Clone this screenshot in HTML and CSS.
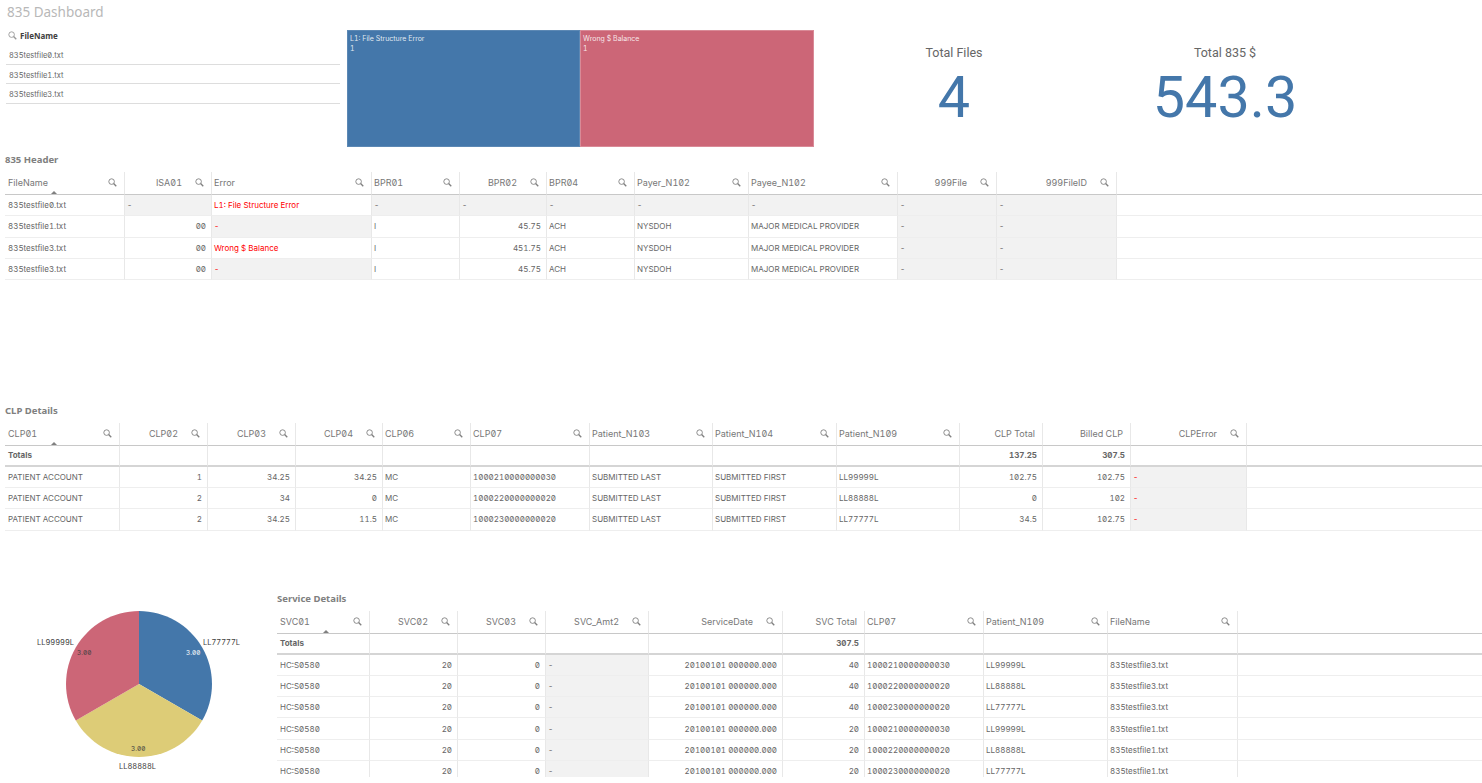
FILE: index.html
```html
<!DOCTYPE html>
<html lang="en">
<head>
    <meta charset="UTF-8">
    <title>835 Dashboard</title>
    <link rel="stylesheet" href="styles.css">
</head>
<body>
    <svg class="defs" width="0" height="0">
        <symbol id="find" viewBox="0 0 10 10">
            <circle cx="4" cy="4" r="3.1" fill="none" stroke="currentColor" stroke-width="1"/>
            <path d="M6.2 6.2L9.2 9.2" stroke="currentColor" stroke-width="1.5"/>
        </symbol>
    </svg>
    <div id="page">
        <div class="title">835 Dashboard</div>
        <div class="top">
            <div class="list">
                <div class="list-head"><svg class="ico"><use href="#find"/></svg><b>FileName</b></div>
                <div class="list-row">835testfile0.txt</div>
                <div class="list-row">835testfile1.txt</div>
                <div class="list-row">835testfile3.txt</div>
            </div>
            <div class="tree">
                <div class="leaf blue">L1: File Structure Error<br>1</div>
                <div class="leaf red">Wrong $ Balance<br>1</div>
            </div>
            <div class="kpi files">
                <div class="kpi-label">Total Files</div>
                <div class="kpi-num">4</div>
            </div>
            <div class="kpi money">
                <div class="kpi-label">Total 835 $</div>
                <div class="kpi-num">543.3</div>
            </div>
        </div>

        <div class="sect s1">835 Header</div>
        <table class="grid t1">
            <colgroup><col><col><col><col><col><col><col><col><col><col><col></colgroup>
            <tr>
                <th class="sorted"><div class="hd"><span>FileName</span><svg class="ico"><use href="#find"/></svg></div></th>
                <th><div class="hd n"><span>ISA01</span><svg class="ico"><use href="#find"/></svg></div></th>
                <th><div class="hd"><span>Error</span><svg class="ico"><use href="#find"/></svg></div></th>
                <th><div class="hd"><span>BPR01</span><svg class="ico"><use href="#find"/></svg></div></th>
                <th><div class="hd n"><span>BPR02</span><svg class="ico"><use href="#find"/></svg></div></th>
                <th><div class="hd"><span>BPR04</span><svg class="ico"><use href="#find"/></svg></div></th>
                <th><div class="hd"><span>Payer_N102</span><svg class="ico"><use href="#find"/></svg></div></th>
                <th><div class="hd"><span>Payee_N102</span><svg class="ico"><use href="#find"/></svg></div></th>
                <th><div class="hd n"><span>999File</span><svg class="ico"><use href="#find"/></svg></div></th>
                <th><div class="hd n"><span>999FileID</span><svg class="ico"><use href="#find"/></svg></div></th>
                <th class="fill"></th>
            </tr>
            <tr>
                <td>835testfile0.txt</td><td class="g">-</td><td class="err">L1: File Structure Error</td><td class="g">-</td><td class="g">-</td><td class="g">-</td><td class="g">-</td><td class="g">-</td><td class="g">-</td><td class="g">-</td><td class="fill"></td>
            </tr>
            <tr>
                <td>835testfile1.txt</td><td class="n">00</td><td class="g err">-</td><td>I</td><td class="n">45.75</td><td>ACH</td><td>NYSDOH</td><td>MAJOR MEDICAL PROVIDER</td><td class="g">-</td><td class="g">-</td><td class="fill"></td>
            </tr>
            <tr>
                <td>835testfile3.txt</td><td class="n">00</td><td class="err">Wrong $ Balance</td><td>I</td><td class="n">451.75</td><td>ACH</td><td>NYSDOH</td><td>MAJOR MEDICAL PROVIDER</td><td class="g">-</td><td class="g">-</td><td class="fill"></td>
            </tr>
            <tr>
                <td>835testfile3.txt</td><td class="n">00</td><td class="g err">-</td><td>I</td><td class="n">45.75</td><td>ACH</td><td>NYSDOH</td><td>MAJOR MEDICAL PROVIDER</td><td class="g">-</td><td class="g">-</td><td class="fill"></td>
            </tr>
        </table>

        <div class="sect s2">CLP Details</div>
        <table class="grid t2">
            <colgroup><col><col><col><col><col><col><col><col><col><col><col><col><col></colgroup>
            <tr>
                <th class="sorted"><div class="hd"><span>CLP01</span><svg class="ico"><use href="#find"/></svg></div></th>
                <th><div class="hd n"><span>CLP02</span><svg class="ico"><use href="#find"/></svg></div></th>
                <th><div class="hd n"><span>CLP03</span><svg class="ico"><use href="#find"/></svg></div></th>
                <th><div class="hd n"><span>CLP04</span><svg class="ico"><use href="#find"/></svg></div></th>
                <th><div class="hd"><span>CLP06</span><svg class="ico"><use href="#find"/></svg></div></th>
                <th><div class="hd"><span>CLP07</span><svg class="ico"><use href="#find"/></svg></div></th>
                <th><div class="hd"><span>Patient_N103</span><svg class="ico"><use href="#find"/></svg></div></th>
                <th><div class="hd"><span>Patient_N104</span><svg class="ico"><use href="#find"/></svg></div></th>
                <th><div class="hd"><span>Patient_N109</span><svg class="ico"><use href="#find"/></svg></div></th>
                <th><div class="hd n"><span>CLP Total</span></div></th>
                <th><div class="hd n"><span>Billed CLP</span></div></th>
                <th><div class="hd n"><span>CLPError</span><svg class="ico"><use href="#find"/></svg></div></th>
                <th class="fill"></th>
            </tr>
            <tr class="totals">
                <td>Totals</td><td></td><td></td><td></td><td></td><td></td><td></td><td></td><td></td><td class="n">137.25</td><td class="n">307.5</td><td></td><td class="fill"></td>
            </tr>
            <tr>
                <td>PATIENT ACCOUNT</td><td class="n">1</td><td class="n">34.25</td><td class="n">34.25</td><td>MC</td><td>1000210000000030</td><td>SUBMITTED LAST</td><td>SUBMITTED FIRST</td><td>LL99999L</td><td class="n">102.75</td><td class="n">102.75</td><td class="g err">-</td><td class="fill"></td>
            </tr>
            <tr>
                <td>PATIENT ACCOUNT</td><td class="n">2</td><td class="n">34</td><td class="n">0</td><td>MC</td><td>1000220000000020</td><td>SUBMITTED LAST</td><td>SUBMITTED FIRST</td><td>LL88888L</td><td class="n">0</td><td class="n">102</td><td class="g err">-</td><td class="fill"></td>
            </tr>
            <tr>
                <td>PATIENT ACCOUNT</td><td class="n">2</td><td class="n">34.25</td><td class="n">11.5</td><td>MC</td><td>1000230000000020</td><td>SUBMITTED LAST</td><td>SUBMITTED FIRST</td><td>LL77777L</td><td class="n">34.5</td><td class="n">102.75</td><td class="g err">-</td><td class="fill"></td>
            </tr>
        </table>

        <div class="bottom">
            <svg class="pie" width="272" height="185" viewBox="0 0 272 185">
                <path d="M134 86V13A73 73 0 0 1 197.2 122.5Z" fill="#4477aa"/>
                <path d="M134 86L197.2 122.5A73 73 0 0 1 70.8 122.5Z" fill="#ddcc77"/>
                <path d="M134 86L70.8 122.5A73 73 0 0 1 134 13Z" fill="#cc6677"/>
                <text x="198" y="47">LL77777L</text>
                <text x="32" y="46.500">LL99999L</text>
                <text x="114" y="171">LL88888L</text>
                <text class="val light" x="181" y="57">3.00</text>
                <text class="val" x="72" y="57">3.00</text>
                <text class="val" x="126" y="153">3.00</text>
            </svg>
            <div class="service">
                <div class="sect">Service Details</div>
                <table class="grid t3">
                    <colgroup><col><col><col><col><col><col><col><col><col><col></colgroup>
                    <tr>
                        <th class="sorted"><div class="hd"><span>SVC01</span><svg class="ico"><use href="#find"/></svg></div></th>
                        <th><div class="hd n"><span>SVC02</span><svg class="ico"><use href="#find"/></svg></div></th>
                        <th><div class="hd n"><span>SVC03</span><svg class="ico"><use href="#find"/></svg></div></th>
                        <th><div class="hd n"><span>SVC_Amt2</span><svg class="ico"><use href="#find"/></svg></div></th>
                        <th><div class="hd n"><span>ServiceDate</span><svg class="ico"><use href="#find"/></svg></div></th>
                        <th><div class="hd n"><span>SVC Total</span></div></th>
                        <th><div class="hd"><span>CLP07</span><svg class="ico"><use href="#find"/></svg></div></th>
                        <th><div class="hd"><span>Patient_N109</span><svg class="ico"><use href="#find"/></svg></div></th>
                        <th><div class="hd"><span>FileName</span><svg class="ico"><use href="#find"/></svg></div></th>
                        <th class="fill"></th>
                    </tr>
                    <tr class="totals">
                        <td>Totals</td><td></td><td></td><td></td><td></td><td class="n">307.5</td><td></td><td></td><td></td><td class="fill"></td>
                    </tr>
                    <tr>
                        <td>HC:S0580</td><td class="n">20</td><td class="n">0</td><td class="g">-</td><td class="n">20100101 000000.000</td><td class="n">40</td><td>1000210000000030</td><td>LL99999L</td><td>835testfile3.txt</td><td class="fill"></td>
                    </tr>
                    <tr>
                        <td>HC:S0580</td><td class="n">20</td><td class="n">0</td><td class="g">-</td><td class="n">20100101 000000.000</td><td class="n">40</td><td>1000220000000020</td><td>LL88888L</td><td>835testfile3.txt</td><td class="fill"></td>
                    </tr>
                    <tr>
                        <td>HC:S0580</td><td class="n">20</td><td class="n">0</td><td class="g">-</td><td class="n">20100101 000000.000</td><td class="n">40</td><td>1000230000000020</td><td>LL77777L</td><td>835testfile3.txt</td><td class="fill"></td>
                    </tr>
                    <tr>
                        <td>HC:S0580</td><td class="n">20</td><td class="n">0</td><td class="g">-</td><td class="n">20100101 000000.000</td><td class="n">20</td><td>1000210000000030</td><td>LL99999L</td><td>835testfile1.txt</td><td class="fill"></td>
                    </tr>
                    <tr>
                        <td>HC:S0580</td><td class="n">20</td><td class="n">0</td><td class="g">-</td><td class="n">20100101 000000.000</td><td class="n">20</td><td>1000220000000020</td><td>LL88888L</td><td>835testfile1.txt</td><td class="fill"></td>
                    </tr>
                    <tr>
                        <td>HC:S0580</td><td class="n">20</td><td class="n">0</td><td class="g">-</td><td class="n">20100101 000000.000</td><td class="n">20</td><td>1000230000000020</td><td>LL77777L</td><td>835testfile1.txt</td><td class="fill"></td>
                    </tr>
                </table>
            </div>
        </div>
    </div>
</body>
</html>
```

FILE: styles.css
```css
html, body {
    margin: 0;
    height: 100%;
    overflow: hidden;
    background: #fff;
}
body {
    font-family: Inter, "Noto Sans", sans-serif;
    font-size: 8px;
    font-feature-settings: "zero", "tnum";
    color: #666;
}
.defs {
    position: absolute;
}
#page {
    height: 777px;
    overflow: hidden;
    padding-left: 5px;
}
.title {
    height: 23px;
    padding: 4px 0 0 2px;
    box-sizing: border-box;
    font-family: "Noto Sans", sans-serif;
    font-size: 13.500px;
    line-height: 16px;
    color: #b8b8b8;
    font-feature-settings: normal;
}
.ico {
    width: 9px;
    height: 9px;
    flex: none;
    color: #808080;
}

/* top row */
.top {
    display: flex;
    height: 125px;
}
.list {
    width: 334px;
    margin-left: 1px;
    margin-right: 7px;
}
.list-head {
    display: flex;
    align-items: center;
    gap: 3px;
    height: 21px;
    padding: 3px 0 0 2px;
    box-sizing: border-box;
    color: #404040;
    font-family: "Noto Sans", sans-serif;
    font-feature-settings: normal;
}
.list-head .ico {
    color: #999;
}
.list-row {
    height: 19.500px;
    padding: 5px 0 0 3px;
    box-sizing: border-box;
    line-height: 12px;
    font-size: 7.500px;
    border-bottom: 1px solid #ddd;
}
.list-row:nth-child(2) {
    height: 20.500px;
    padding-top: 6px;
}
.tree {
    display: flex;
    width: 467px;
    height: 117px;
    margin-top: 7px;
    color: #fff;
}
.leaf {
    box-sizing: border-box;
    padding: 3px 2px;
    line-height: 10px;
    font-size: 7px;
    color: rgba(255, 255, 255, 0.85);
}
.blue {
    width: 233px;
    background: #4477aa;
    border: 1px solid #5c88b4;
}
.red {
    width: 234px;
    background: #cc6677;
    border: 1px solid #d98a97;
}
.kpi {
    text-align: center;
    font-family: Roboto, sans-serif;
    font-feature-settings: normal;
}
.files {
    width: 280px;
}
.money {
    width: 262px;
}
.kpi-label {
    margin-top: 21px;
    font-size: 12.500px;
    line-height: 18px;
    color: #666;
}
.kpi-num {
    font-size: 57.500px;
    line-height: 66px;
    margin-top: 3px;
    color: #4477aa;
}

/* section titles */
.sect {
    font-family: "Noto Sans", sans-serif;
    font-weight: 700;
    font-size: 9.500px;
    line-height: 12px;
    margin-bottom: 6px;
    color: #808080;
    font-feature-settings: normal;
}
.s1 {
    margin-top: 6px;
}
.s2 {
    margin-top: 124.500px;
}

/* data tables */
.grid {
    table-layout: fixed;
    border-collapse: separate;
    border-spacing: 0;
}
.grid th {
    position: relative;
    height: 23px;
    padding: 0;
    font-weight: 400;
    font-size: 9px;
    color: #777;
    border-bottom: 1px solid #c8c8c8;
    border-right: 1px solid #e8e8e8;
    box-sizing: border-box;
}
.grid td {
    height: 21.300px;
    padding: 0 2px;
    box-sizing: border-box;
    white-space: nowrap;
    overflow: hidden;
    border-bottom: 1px solid #eee;
    border-right: 1px solid #e8e8e8;
}
.grid td:first-child {
    padding-left: 3px;
}
.grid .fill {
    border-right: 0;
}
.hd {
    display: flex;
    align-items: center;
    gap: 13px;
    padding: 0 7px 0 2px;
    margin-top: -1px;
}
th:first-child .hd {
    padding-left: 3px;
}
.hd span {
    flex: 1;
    white-space: nowrap;
    text-align: left;
}
.hd.n span {
    text-align: right;
}
.grid td.n {
    text-align: right;
    padding-right: 5px;
}
.grid td.g {
    background: #f2f2f2;
}
.grid td.err {
    color: #f00;
}
.sorted::after {
    content: '';
    position: absolute;
    left: 46px;
    bottom: 0;
    border: 3px solid transparent;
    border-top: 0;
    border-bottom-color: #808080;
}
.totals td {
    height: 21px;
    font-weight: 700;
    border-bottom: 2px solid #d5d5d5;
}

.t1 {
    width: 1477px;
}
.t1 col:nth-child(1) { width: 120px; }
.t1 col:nth-child(2) { width: 87px; }
.t1 col:nth-child(3) { width: 160px; }
.t1 col:nth-child(4) { width: 88px; }
.t1 col:nth-child(5) { width: 87px; }
.t1 col:nth-child(6) { width: 88px; }
.t1 col:nth-child(7) { width: 114px; }
.t1 col:nth-child(8) { width: 149px; }
.t1 col:nth-child(9) { width: 99px; }
.t1 col:nth-child(10) { width: 120px; }

.t2 {
    width: 1477px;
}
.t2 col:nth-child(1) { width: 115px; }
.t2 col:nth-child(2) { width: 88px; }
.t2 col:nth-child(3) { width: 88px; }
.t2 col:nth-child(4) { width: 87px; }
.t2 col:nth-child(5) { width: 88px; }
.t2 col:nth-child(6) { width: 119px; }
.t2 col:nth-child(7) { width: 123px; }
.t2 col:nth-child(8) { width: 124px; }
.t2 col:nth-child(9) { width: 123px; }
.t2 col:nth-child(10) { width: 83px; }
.t2 col:nth-child(11) { width: 88px; }
.t2 col:nth-child(12) { width: 116px; }

.t3 {
    width: 1205px;
}
.t3 col:nth-child(1) { width: 93px; }
.t3 col:nth-child(2) { width: 88px; }
.t3 col:nth-child(3) { width: 88px; }
.t3 col:nth-child(4) { width: 103px; }
.t3 col:nth-child(5) { width: 134px; }
.t3 col:nth-child(6) { width: 82px; }
.t3 col:nth-child(7) { width: 119px; }
.t3 col:nth-child(8) { width: 124px; }
.t3 col:nth-child(9) { width: 130px; }

/* pie and service details */
.bottom {
    display: flex;
    margin-top: 62px;
}
.pie {
    flex: none;
    margin-top: 5.500px;
    font-size: 7.500px;
    fill: #404040;
}
.pie .val {
    font-size: 6.500px;
}
.pie .light {
    fill: #fff;
}
.service {
    flex: none;
    width: 1205px;
}
```
